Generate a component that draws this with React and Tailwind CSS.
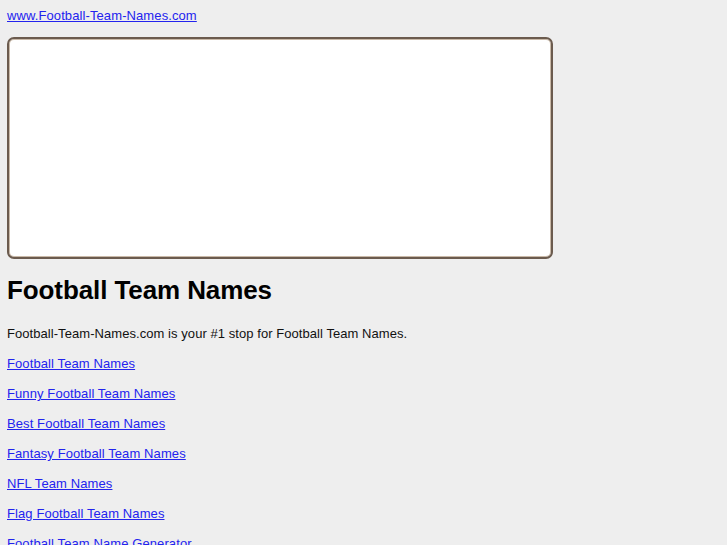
import React from 'react';

const links = [
  'Football Team Names',
  'Funny Football Team Names',
  'Best Football Team Names',
  'Fantasy Football Team Names',
  'NFL Team Names',
  'Flag Football Team Names',
  'Football Team Name Generator',
];

export default function App() {
  return (
    <div className="min-h-screen bg-[#eeeeee] px-[7px] pt-[8px] text-[13px] tracking-[0.1px] text-[#111111] [font-family:'Liberation_Sans',Arial,sans-serif]">
      <a href="#" className="block w-fit leading-[15px] text-[#2323ee] underline">
        www.Football-Team-Names.com
      </a>

      {/* ad box */}
      <div className="mt-[14px] h-[222px] w-[546px] rounded-[7px] border-2 border-[#6b5b4e] bg-white shadow-[inset_0_0_0_1px_#c9b9a8]" />

      <h1 className="mt-[16px] text-[26px] font-bold leading-[30px] tracking-[-0.1px] text-black">Football Team Names</h1>

      <p className="mt-[20px] leading-[17px] tracking-[0.06px]">Football-Team-Names.com is your #1 stop for Football Team Names.</p>

      <div className="mt-[13px] flex flex-col gap-[13px]">
        {links.map((l) => (
          <a key={l} href="#" className="block w-fit leading-[17px] text-[#2323ee] underline">
            {l}
          </a>
        ))}
      </div>
    </div>
  );
}
